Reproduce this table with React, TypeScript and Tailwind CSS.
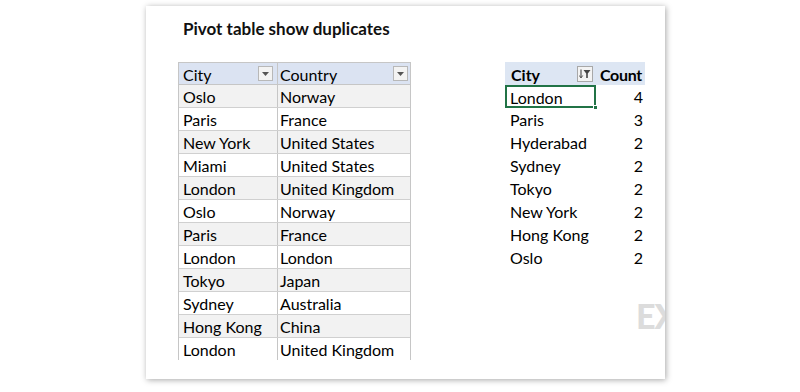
import React from "react";

const left: [string, string][] = [
  ["Oslo", "Norway"],
  ["Paris", "France"],
  ["New York", "United States"],
  ["Miami", "United States"],
  ["London", "United Kingdom"],
  ["Oslo", "Norway"],
  ["Paris", "France"],
  ["London", "London"],
  ["Tokyo", "Japan"],
  ["Sydney", "Australia"],
  ["Hong Kong", "China"],
  ["London", "United Kingdom"],
];

const pivot: [string, number][] = [
  ["London", 4],
  ["Paris", 3],
  ["Hyderabad", 2],
  ["Sydney", 2],
  ["Tokyo", 2],
  ["New York", 2],
  ["Hong Kong", 2],
  ["Oslo", 2],
];

function DropBtn() {
  return (
    <div className="w-[15px] h-[15px] border border-[#b8b8b8] bg-[#f3f3f3] flex items-center justify-center">
      <svg width="7" height="4" viewBox="0 0 7 4">
        <path d="M0 0 L7 0 L3.5 4 Z" fill="#555" />
      </svg>
    </div>
  );
}

function FilterBtn() {
  return (
    <div className="w-[16px] h-[16px] border border-[#a8a8a8] bg-[#f3f3f3] flex items-center justify-center">
      <svg width="12" height="10" viewBox="0 0 12 10">
        <path d="M2 0.5 V8.5" stroke="#555" strokeWidth="1.2" />
        <path d="M0.3 6.5 L2 9 L3.7 6.5" stroke="#555" strokeWidth="1" fill="none" />
        <path d="M4.5 1 H11.5 L8.8 4.5 V9 H7.2 V4.5 Z" fill="#444" />
      </svg>
    </div>
  );
}

export default function App() {
  return (
    <div
      className="w-[800px] h-[392px] bg-white pt-[6px] pl-[146px] text-black"
      style={{ fontFamily: "Lato, 'Open Sans', sans-serif" }}
    >
      <div className="relative w-[519px] h-[373px] bg-white overflow-hidden shadow-[1px_1px_6px_rgba(0,0,0,0.35)] pl-[32px] pt-[12px]">
        <div className="pl-[5px] text-[17px] font-bold leading-[22px] text-[#111]">
          Pivot table show duplicates
        </div>
        <div className="flex mt-[22px]">
          {/* left table */}
          <div className="w-[233px] h-[298px] overflow-hidden border-l border-r border-[#c6c6c6] text-[16px] leading-[22px]">
            <div className="flex h-[23px] bg-[#dbe3f2] border-t border-b border-[#c6c6c6]">
              <div className="w-[99px] border-r border-[#c6c6c6] flex items-center justify-between pl-[4px] pr-[4px]">
                <span className="pt-[2px]">City</span>
                <DropBtn />
              </div>
              <div className="flex-1 flex items-center justify-between pl-[2px] pr-[2px]">
                <span className="pt-[2px]">Country</span>
                <DropBtn />
              </div>
            </div>
            {left.map(([c, k], i) => (
              <div
                key={i}
                className={
                  "flex h-[23px] border-b border-[#d0d0d0] pt-[1px] " +
                  (i % 2 === 0 ? "bg-[#f2f2f2]" : "bg-white")
                }
              >
                <div className="w-[99px] border-r border-[#c6c6c6] pl-[4px] -mt-[1px] pt-[1px]">{c}</div>
                <div className="flex-1 pl-[2px]">{k}</div>
              </div>
            ))}
          </div>
          {/* pivot */}
          <div className="ml-[94px] w-[140px] text-[16px] leading-[22px]">
            <div className="flex h-[23px] bg-[#dde6f3] items-center">
              <div className="w-[91px] flex items-center justify-between pl-[6px] pr-[3px] font-bold">
                <span className="pt-[2px]">City</span>
                <FilterBtn />
              </div>
              <div className="flex-1 text-right pr-[3px] font-bold pt-[2px] tracking-[-0.3px]">Count</div>
            </div>
            {pivot.map(([c, n], i) => (
              <div key={i} className="flex h-[23px] pt-[1px]">
                <div
                  className={
                    "relative w-[91px] " +
                    (i === 0
                      ? "border-2 border-[#217346] pl-[3px] leading-[19px] -mt-[1px] pt-[1px]"
                      : "pl-[5px]")
                  }
                >
                  {c}
                  {i === 0 && (
                    <div className="absolute right-[-4px] bottom-[-4px] w-[5px] h-[5px] bg-[#217346] border border-white" />
                  )}
                </div>
                <div className="flex-1 text-right pr-[2px]">{n}</div>
              </div>
            ))}
          </div>
        </div>
        <div className="absolute left-[490px] top-[293px] text-[34px] font-black text-[#dcdcdc] leading-none tracking-[-1px]">
          EX
        </div>
      </div>
    </div>
  );
}
